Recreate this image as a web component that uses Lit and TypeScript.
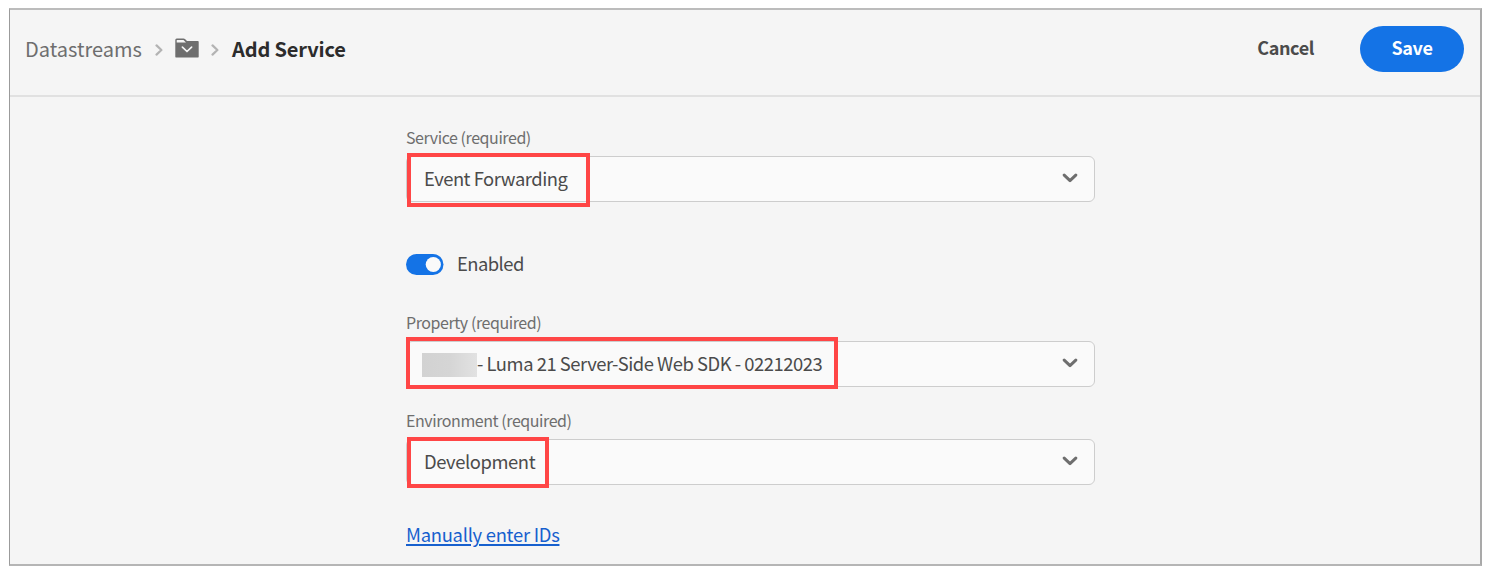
import { LitElement, html, css, nothing } from "lit";
import { customElement, property } from "lit/decorators.js";

const FONT = css`"Noto Sans CJK SC", "Noto Sans", sans-serif`;

@customElement("picker-field")
class PickerField extends LitElement {
  @property() label = "";
  @property() value = "";
  @property({ type: Boolean }) masked = false;

  static styles = css`
    :host { display: block; font-family: ${FONT}; }
    .label { box-sizing: border-box; height: 36px; line-height: 34px; font-size: 16px; color: #6e6e6e; white-space: nowrap; letter-spacing: -0.43px; }
    .box {
      position: relative; box-sizing: border-box; width: 689px; height: 46px;
      border: 1px solid #cdcdcd; border-radius: 6px; background: #fafafa;
      display: flex; align-items: center; justify-content: space-between; padding: 0 16px 0 17px;
    }
    .value { display: flex; align-items: center; height: 44px; font-size: 18.4px; line-height: 42px; color: #4b4b4b; white-space: nowrap; letter-spacing: var(--value-ls, 0); }
    .text { height: 44px; }
    .masked { margin-left: -2px; }
    .mask { width: 55px; height: 24px; margin-top: 2px; background: linear-gradient(90deg, #d2d2d2, #d5d5d5 50%, #e2e2e2); }
    .mark {
      position: absolute; box-sizing: border-box; border: 4px solid #ff4646;
      left: var(--mark-left, 0px); top: var(--mark-top, -4px); width: var(--mark-width, 183px); height: var(--mark-height, 54px);
    }
    svg { display: block; margin-bottom: 2px; }
  `;

  render() {
    return html`
      <div class="label">${this.label}</div>
      <div class="box">
        <div class="value ${this.masked ? "masked" : ""}">
          ${this.masked ? html`<span class="mask"></span>` : nothing}<span class="text">${this.value}</span>
        </div>
        <svg width="16" height="10" viewBox="0 0 16 10"><path d="M2.2 2.1 8 7.6 13.8 2.1" fill="none" stroke="#6e6e6e" stroke-width="3" stroke-linecap="round" stroke-linejoin="round"/></svg>
        <div class="mark"></div>
      </div>
    `;
  }
}

@customElement("app-root")
class AppRoot extends LitElement {
  static styles = css`
    :host { display: block; box-sizing: border-box; width: 1489px; height: 573px; padding: 8px 7px 7px 9px; background: #fff; font-family: ${FONT}; }
    .frame { box-sizing: border-box; height: 558px; border: 1px solid #9b9b9b; border-top: 2px solid #bcbcbc; border-bottom: 2px solid #b5b5b5; border-right: 2px solid #a9a9a9; background: #f5f5f5; }
    .header { box-sizing: border-box; height: 87px; border-bottom: 2px solid #e1e1e1; display: flex; justify-content: space-between; padding: 0 16px 0 15px; }
    .crumbs { display: flex; align-items: center; height: 77px; font-size: 20px; color: #6e6e6e; white-space: nowrap; }
    .root { width: 118px; }
    .current { color: #2c2c2c; font-weight: 700; margin-left: 13px; letter-spacing: -0.15px; }
    .sep { margin: 3px 12px 0 12px; }
    .last { margin: 3px 0 0 12px; }
    .folder { margin-bottom: 1px; }
    .actions { display: flex; align-items: center; height: 77px; gap: 46px; font-size: 18px; font-weight: 700; letter-spacing: -0.4px; }
    .cancel { color: #4b4b4b; padding-bottom: 3px; }
    .save { width: 104px; height: 46px; line-height: 42px; border-radius: 23px; background: #1473e6; color: #fff; text-align: center; }
    .form { width: 690px; margin-left: 396px; padding-top: 23px; }
    .toggle { display: flex; align-items: center; gap: 13px; height: 40px; margin: 42px 0 21px; font-size: 18.4px; letter-spacing: -0.55px; color: #4b4b4b; }
    .toggle span { padding-bottom: 2px; }
    .service { --value-ls: -0.48px; --mark-left: 0px; --mark-top: -4px; --mark-width: 183px; --mark-height: 54px; }
    .property { --value-ls: -0.47px; --mark-left: -1px; --mark-top: -5px; --mark-width: 432px; --mark-height: 52px; }
    .environment { --value-ls: -0.42px; --mark-left: 0px; --mark-top: -3px; --mark-width: 142px; --mark-height: 51px; margin-top: 16px; }
    .link { display: inline-block; margin-top: 35px; line-height: 28px; font-size: 18.4px; letter-spacing: -0.27px; color: #1760ce; text-decoration: underline; text-decoration-thickness: 1.5px; text-underline-offset: 2px; white-space: nowrap; }
    svg { display: block; flex: none; }
  `;

  private chevron(cls: string) {
    return html`<svg class=${cls} width="8" height="12" viewBox="0 0 8 12"><path d="M1.5 1.4 6.4 6 1.5 10.6" fill="none" stroke="#b3b3b3" stroke-width="2.2" stroke-linecap="round" stroke-linejoin="round"/></svg>`;
  }

  render() {
    return html`
      <div class="frame">
        <div class="header">
          <div class="crumbs">
            <span class="root">Datastreams</span>
            ${this.chevron("sep")}
            <svg class="folder" width="24" height="20" viewBox="0 0 24 20">
              <path d="M.3 18.8V2Q.3.5 1.7.5H8.6Q9.4.5 10 1.1L12 3.1H23Q23.7 3.1 23.7 3.9V18.8Q23.7 19.4 23.1 19.4H.9Q.3 19.4.3 18.8Z" fill="#6e6e6e"/>
              <path d="M1.7 4.5V2.4Q1.7 1.9 2.2 1.9H8.5L11 4.5Z" fill="#f5f5f5"/>
              <path d="M7.4 9.1 12 13.5 16.6 9.1" fill="none" stroke="#f5f5f5" stroke-width="1.7" stroke-linecap="round" stroke-linejoin="round"/>
            </svg>
            ${this.chevron("last")}
            <span class="current">Add Service</span>
          </div>
          <div class="actions"><span class="cancel">Cancel</span><span class="save">Save</span></div>
        </div>
        <div class="form">
          <picker-field class="service" label="Service (required)" value="Event Forwarding"></picker-field>
          <div class="toggle">
            <svg width="38" height="21" viewBox="0 0 38 21"><rect width="37.5" height="21" rx="10.5" fill="#1473e6"/><circle cx="27.3" cy="10.5" r="7.6" fill="#fafafa"/></svg>
            <span>Enabled</span>
          </div>
          <picker-field class="property" masked label="Property (required)" value="- Luma 21 Server-Side Web SDK - 02212023"></picker-field>
          <picker-field class="environment" label="Environment (required)" value="Development"></picker-field>
          <a class="link">Manually enter IDs</a>
        </div>
      </div>
    `;
  }
}
